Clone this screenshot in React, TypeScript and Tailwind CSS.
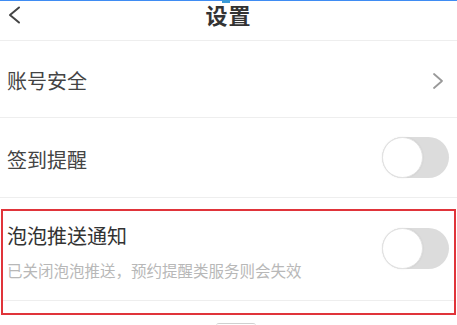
import React from "react";

const font = { fontFamily: '"Noto Sans CJK SC", "Noto Sans", sans-serif' };

function Toggle() {
  return (
    <div className="relative w-[67px] h-[41px] rounded-full bg-[#dcdcdc] shrink-0">
      <div className="absolute left-0 top-0 w-[41px] h-[41px] rounded-full bg-white border border-[#e2e2e2] shadow-[0_0_2px_rgba(0,0,0,0.08)]" />
    </div>
  );
}

function Sep() {
  return <div className="h-px bg-[#eeeeee] w-full" />;
}

export default function App() {
  return (
    <div className="w-[457px] h-[325px] bg-white overflow-hidden text-[#3a3a3a]" style={font}>
      <div className="relative h-px bg-[#3f8cf3]">
        <div className="absolute left-[222px] top-0 w-[8px] h-[3px] bg-[#3a9ad8]" />
      </div>
      <div className="relative h-[39px] flex justify-center">
        <svg className="absolute left-[7px] top-[5px]" width="14" height="18" viewBox="0 0 14 18">
          <polyline points="12,1.5 3,9 12,16.5" fill="none" stroke="#444" strokeWidth="2" strokeLinecap="round" strokeLinejoin="round" />
        </svg>
        <div className="text-[22px] leading-[28px] font-bold text-[#333] tracking-[1px] -mt-[1px]">设置</div>
      </div>
      <Sep />
      <div className="h-[76px] flex items-center justify-between pl-[7px] pr-[13px] pt-[4px]">
        <span className="text-[20px] leading-[20px] text-[#444]">账号安全</span>
        <svg width="12" height="18" viewBox="0 0 12 18">
          <polyline points="2,2 10,9 2,16" fill="none" stroke="#999" strokeWidth="1.8" strokeLinecap="round" strokeLinejoin="round" />
        </svg>
      </div>
      <Sep />
      <div className="h-[79px] flex items-center justify-between pl-[7px] pr-[8px]">
        <span className="text-[20px] leading-[20px] text-[#444] mt-[5px]">签到提醒</span>
        <Toggle />
      </div>
      <Sep />
      <div className="h-[11px]" />
      <div className="mx-[1px] h-[106px] border-2 border-[#e0343a] flex flex-col">
        <div className="flex justify-between pl-[4px] pr-[5px] pt-[15px]">
          <div className="flex flex-col">
            <span className="text-[20px] leading-[20px] text-[#333]">泡泡推送通知</span>
            <span className="text-[15.5px] leading-[16px] text-[#b8b8b8] mt-[16px]">已关闭泡泡推送，预约提醒类服务则会失效</span>
          </div>
          <div className="mt-[2px]">
            <Toggle />
          </div>
        </div>
        <div className="mt-[22px]">
          <Sep />
        </div>
      </div>
      <div className="flex justify-center pt-[8px] pl-[14px]">
        <div className="w-[40px] h-[3px] rounded-t-full border-t border-[#d0d0d0]" />
      </div>
    </div>
  );
}
